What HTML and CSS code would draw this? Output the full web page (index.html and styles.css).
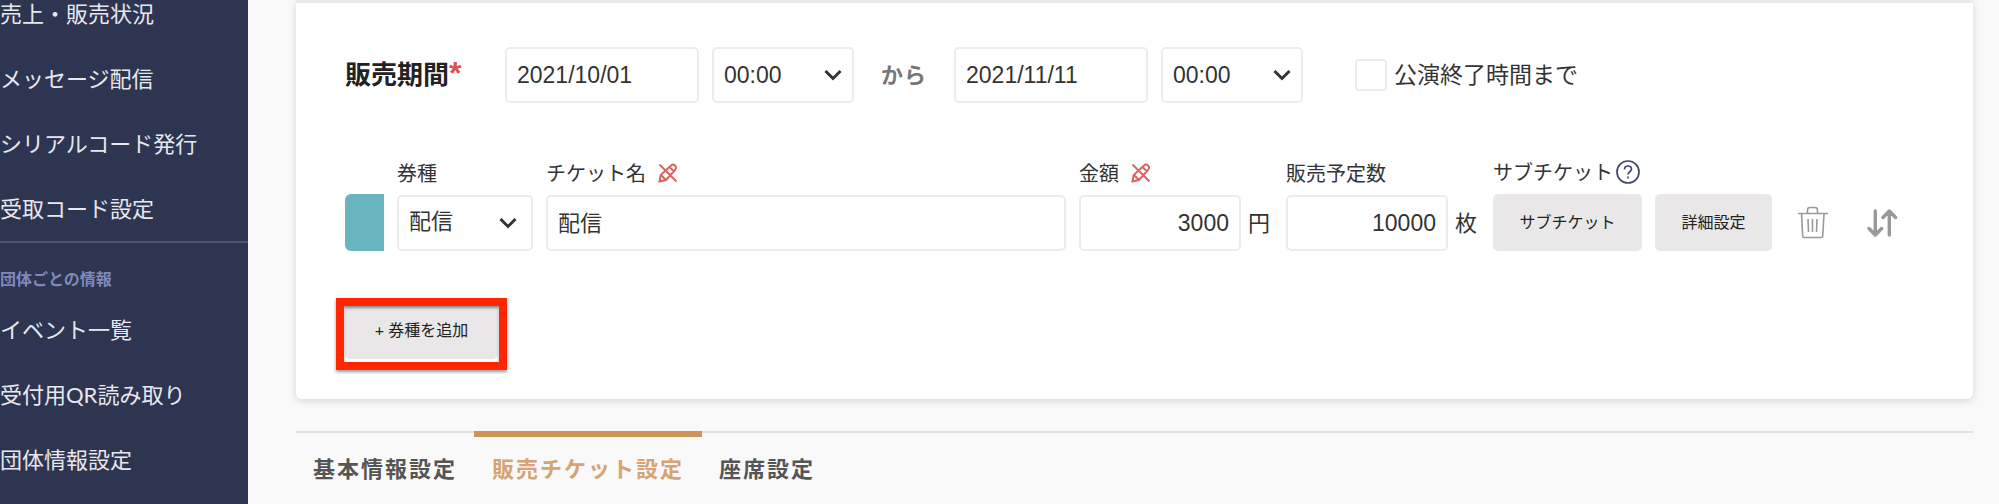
FILE: index.html
```html
<!DOCTYPE html>
<html lang="ja">
<head>
    <meta charset="UTF-8">
    <meta name="viewport" content="width=device-width, initial-scale=1.0">
    <title>販売チケット設定</title>
    <link rel="stylesheet" href="styles.css">
</head>
<body>
    <aside class="sidebar">
        <nav class="side-menu">
            <a href="#">売上・販売状況</a>
            <a href="#">メッセージ配信</a>
            <a href="#">シリアルコード発行</a>
            <a href="#">受取コード設定</a>
        </nav>
        <h2 class="side-title">団体ごとの情報</h2>
        <nav class="side-menu">
            <a href="#">イベント一覧</a>
            <a href="#">受付用QR読み取り</a>
            <a href="#">団体情報設定</a>
        </nav>
    </aside>

    <main>
        <form class="card">
            <div class="period">
                <h3 class="period-title">販売期間<span class="required">*</span></h3>
                <input type="text" class="control date" value="2021/10/01" aria-label="開始日">
                <select class="control time" aria-label="開始時間">
                    <option>00:00</option>
                </select>
                <span class="from">から</span>
                <input type="text" class="control date" value="2021/11/11" aria-label="終了日">
                <select class="control time" aria-label="終了時間">
                    <option>00:00</option>
                </select>
                <input type="checkbox" id="until-end" class="check">
                <label for="until-end" class="check-label">公演終了時間まで</label>
            </div>

            <div class="ticket">
                <span class="swatch"></span>
                <div class="field">
                    <label for="type">券種</label>
                    <select id="type" class="control type">
                        <option>配信</option>
                    </select>
                </div>
                <div class="field field-name">
                    <label for="name">チケット名
                        <svg class="no-edit" viewBox="0 0 20 20"><path d="M1.500 18.500l1.200-6.500L13 2.500q2-2 4 0t0 4.500L8 17zM3 12l5 5M11.500 4l4.500 4.500M1.500 1.500l17 17"/></svg>
                    </label>
                    <input type="text" id="name" class="control name" value="配信">
                </div>
                <div class="field">
                    <label for="price">金額
                        <svg class="no-edit" viewBox="0 0 20 20"><path d="M1.500 18.500l1.200-6.500L13 2.500q2-2 4 0t0 4.500L8 17zM3 12l5 5M11.500 4l4.500 4.500M1.500 1.500l17 17"/></svg>
                    </label>
                    <div class="with-unit">
                        <input type="text" id="price" class="control number" value="3000">
                        <span class="unit">円</span>
                    </div>
                </div>
                <div class="field">
                    <label for="count">販売予定数</label>
                    <div class="with-unit">
                        <input type="text" id="count" class="control number" value="10000">
                        <span class="unit">枚</span>
                    </div>
                </div>
                <div class="field">
                    <div class="field-label">サブチケット
                        <svg class="help" viewBox="0 0 24 24"><circle cx="12" cy="12" r="11"/><path d="M8.500 9.500q0-3.500 3.500-3.500t3.500 3q0 1.500-1.700 2.700T12 14.500"/><path d="M12 16.500v2"/></svg>
                    </div>
                    <button type="button" class="btn btn-sub">サブチケット</button>
                </div>
                <button type="button" class="btn btn-detail">詳細設定</button>
                <button type="button" class="icon-btn" aria-label="削除">
                    <svg class="trash" width="32" height="34" viewBox="0 0 32 34"><path d="M1 7.500h30M10.500 7V4q0-2.500 2.500-2.500h5q2.500 0 2.500 2.500v3M4.500 8l1.200 22q0 1.500 1.500 1.500h17q1.500 0 1.500-1.500L27 8M11 13l.5 13M15.500 13v13M20 13l-.5 13"/></svg>
                </button>
                <button type="button" class="icon-btn icon-sort" aria-label="並び替え">
                    <svg class="sort" width="31" height="28" viewBox="0 0 31 28"><path d="M8.300 2v23M2 19.500l6.300 6.500 6.300-6.500M22.300 26V3M16 8.500L22.300 2l6.300 6.500"/></svg>
                </button>
            </div>

            <div class="add">
                <button type="button" class="btn btn-add">+ 券種を追加</button>
            </div>
        </form>

        <nav class="tabs">
            <a href="#">基本情報設定</a>
            <a href="#" class="active">販売チケット設定</a>
            <a href="#">座席設定</a>
        </nav>
    </main>
</body>
</html>
```
FILE: styles.css
```css
* {
    box-sizing: border-box;
}

body {
    margin: 0;
    min-height: 100vh;
    display: flex;
    background-color: #f9f9f9;
    color: #333;
    font-family: Lato, "Noto Sans CJK JP", sans-serif;
}

a {
    text-decoration: none;
}

/* sidebar */
.sidebar {
    flex: 0 0 248px;
    background-color: #2e3551;
}

.side-menu {
    display: flex;
    flex-direction: column;
    gap: 37px;
}

.side-menu a {
    color: #e6e8ee;
    font-size: 22px;
    line-height: 28px;
    white-space: nowrap;
}

.side-title {
    margin: 18px 0 25px;
    padding-top: 24px;
    border-top: 2px solid #51566d;
    color: #8289b9;
    font-size: 16px;
    line-height: 24px;
}

/* main */
main {
    flex: 1;
    min-width: 0;
    padding: 0 26px 0 48px;
}

.card {
    padding: 44px 49px 40px;
    background-color: #fff;
    border-top: 3px solid #e8e9ed;
    border-radius: 0 0 6px 6px;
    box-shadow: 0 2px 8px rgba(0, 0, 0, 0.14);
}

.control {
    height: 56px;
    padding: 0 10px;
    border: 2px solid #ececec;
    border-radius: 5px;
    background-color: #fff;
    color: #333;
    font-family: "Liberation Sans", "Noto Sans CJK JP", sans-serif;
    font-size: 23px;
}

select.control {
    appearance: none;
    background-image: url("data:image/svg+xml,%3Csvg xmlns='http://www.w3.org/2000/svg' width='18' height='12' fill='none' stroke='%23333' stroke-width='3'%3E%3Cpath d='M1.500 2L9 9.500 16.500 2'/%3E%3C/svg%3E");
    background-repeat: no-repeat;
    background-position: right 10px center;
}

.period {
    display: flex;
    align-items: center;
}

.period-title {
    width: 160px;
    margin: 0;
    padding-bottom: 4px;
    color: #222;
    font-size: 26px;
    line-height: 32px;
}

.required {
    color: #d9534f;
    font-family: "Liberation Sans", sans-serif;
    font-size: 32px;
    line-height: 1;
}

.date {
    width: 194px;
    margin-right: 13px;
}

.time {
    width: 142px;
}

.from {
    margin: 0 27px;
    padding-bottom: 4px;
    color: #777;
    font-size: 22px;
    font-weight: bold;
    letter-spacing: 1px;
}

.check {
    appearance: none;
    width: 32px;
    height: 32px;
    margin: 0 7px 0 52px;
    border: 2px solid #ececec;
    border-radius: 4px;
    background-color: #fff;
}

.check-label {
    padding-bottom: 3px;
    font-size: 23px;
    line-height: 32px;
}

.ticket {
    display: flex;
    align-items: flex-end;
    gap: 13px;
    margin-top: 57px;
}

.swatch {
    width: 39px;
    height: 57px;
    border-radius: 6px 0 0 6px;
    background-color: #69b5bf;
}

.field {
    display: flex;
    flex-direction: column;
    gap: 10px;
}

.field-name {
    flex: 1;
    min-width: 0;
}

.field label,
.field-label {
    display: flex;
    align-items: center;
    font-size: 20px;
    line-height: 24px;
}

.type,
.name {
    padding-bottom: 4px;
    font-size: 22px;
}

.type {
    width: 136px;
}

select.type {
    background-position: right 14px center;
}

.no-edit {
    width: 20px;
    height: 20px;
    margin-left: 12px;
    fill: none;
    stroke: #dc6464;
    stroke-width: 2;
}

.help {
    width: 24px;
    height: 24px;
    margin-left: 3px;
    fill: none;
    stroke: #3f4870;
    stroke-width: 1.7;
}

.with-unit {
    display: flex;
    align-items: center;
    gap: 7px;
    margin-right: 3px;
}

.unit {
    padding-bottom: 4px;
    font-size: 22px;
}

.number {
    width: 162px;
    text-align: right;
}

.btn {
    height: 57px;
    padding: 0 0 4px;
    border: none;
    border-radius: 5px;
    background-color: #e9e7e8;
    color: #222;
    font-family: inherit;
    font-size: 16px;
    cursor: pointer;
}

.btn-sub {
    width: 149px;
}

.btn-detail {
    width: 117px;
}

.icon-btn {
    display: flex;
    align-items: center;
    height: 57px;
    margin-left: 12px;
    padding: 0;
    border: none;
    background: none;
    cursor: pointer;
}

.icon-btn svg {
    fill: none;
    stroke: #999;
}

.trash {
    stroke-width: 1.6;
}

.sort {
    stroke-width: 3.4;
    stroke-linecap: round;
    stroke-linejoin: round;
}

.icon-sort {
    margin: 0 26px 0 25px;
}

.add {
    position: relative;
    width: 153px;
    margin-top: 51px;
}

.btn-add {
    display: block;
    width: 100%;
}

/* highlight frame around the add button */
.add::after {
    content: "";
    position: absolute;
    inset: -4px -9px -11px;
    border: 8px solid #ff2600;
    box-shadow: 0 2px 3px rgba(0, 0, 0, 0.4), inset 0 2px 3px rgba(0, 0, 0, 0.4);
    pointer-events: none;
}

/* tabs */
.tabs {
    display: flex;
    margin-top: 32px;
    border-top: 2px solid #e2e2e2;
}

.tabs a {
    margin-top: -2px;
    padding: 16px 17px;
    border-top: 6px solid transparent;
    color: #555;
    font-size: 22px;
    font-weight: bold;
    line-height: 32px;
    letter-spacing: 2px;
}

.tabs .active {
    padding: 16px 18px;
    border-top-color: #cd935a;
    color: #d6a374;
}
```
